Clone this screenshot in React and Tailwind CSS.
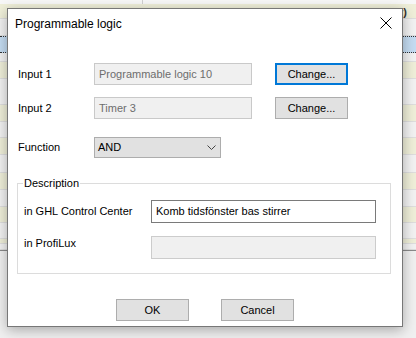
import React from "react";

const bgRows = [
  { h: 15, c: "bg-[#efefd9]", text: true },
  { h: 17, c: "bg-[#f2f2f2]" },
  { h: 17, c: "bg-[#c4dcf2]", sel: true },
  { h: 9, c: "bg-[#f2f2f2]" },
  { h: 17, c: "bg-[#efefd9]" },
  { h: 26, c: "bg-[#f2f2f2]" },
  { h: 17, c: "bg-[#efefd9]" },
  { h: 16, c: "bg-[#f2f2f2]" },
  { h: 17, c: "bg-[#efefd9]" },
  { h: 18, c: "bg-[#f2f2f2]" },
  { h: 17, c: "bg-[#efefd9]" },
  { h: 17, c: "bg-[#f2f2f2]" },
  { h: 16, c: "bg-[#efefd9]" },
  { h: 16, c: "bg-[#f2f2f2]" },
  { h: 5, c: "bg-[#efefd9]" },
  { h: 6, c: "bg-[#f2f2f2]" },
];

function Btn({ children, focused, className = "" }) {
  return (
    <div
      className={
        "w-[73px] h-[22px] flex items-center justify-center bg-[#e1e1e1] text-[11px] text-black " +
        (focused ? "border-2 border-[#0078d7] " : "border border-[#adadad] ") +
        className
      }
    >
      {children}
    </div>
  );
}

export default function App() {
  return (
    <div className="relative w-[416px] h-[338px] overflow-hidden bg-[#f0f0f0] font-['Liberation_Sans',Arial,sans-serif]">
      {/* background window */}
      <div className="flex flex-col w-full">
        <div className="flex h-[4px] bg-[#f7f7f7]">
          <div className="w-[143px] border-r border-[#d0d0d0]"></div>
        </div>
        {bgRows.map((r, i) => (
          <div
            key={i}
            className={
              "w-full border-b border-[#dedede] overflow-hidden " +
              r.c +
              (r.sel ? " border-t border-dotted border-t-[#333] border-b-[#333]" : "")
            }
            style={{ height: r.h }}
          >
            {r.text && (
              <div className="pl-[146px] pt-[2px] text-[11px] font-bold text-[#333] leading-[12px] whitespace-nowrap">
                Redigera Programmable logic (logiska funktioner)
              </div>
            )}
          </div>
        ))}
        <div className="w-full h-[1px] bg-[#8a8a8a]"></div>
      </div>

      {/* dialog */}
      <div className="absolute left-[7px] top-[8px] w-[396px] h-[319px] bg-white border border-[#777777] shadow-[0_3px_12px_rgba(0,0,0,0.3)] flex flex-col">
        <div className="h-[29px] flex items-center justify-between pl-[7px] pr-[10px]">
          <span className="text-[12px] text-black leading-[14px]">Programmable logic</span>
          <svg width="12" height="12" viewBox="0 0 12 12" className="mb-[2px]">
            <path d="M0.5 0.5 L11.5 11.5 M11.5 0.5 L0.5 11.5" stroke="#000" strokeWidth="1" fill="none" />
          </svg>
        </div>

        {/* Input 1 */}
        <div className="mt-[25px] flex items-center h-[22px] pl-[10px] text-[11px] text-black">
          <div className="w-[76px]">Input 1</div>
          <div className="w-[158px] h-[22px] bg-[#f0f0f0] border border-[#c9c9c9] flex items-center pl-[4px] text-[#6d6d6d]">
            Programmable logic 10
          </div>
          <Btn focused className="ml-[23px]">Change...</Btn>
        </div>

        {/* Input 2 */}
        <div className="mt-[12px] flex items-center h-[22px] pl-[10px] text-[11px] text-black">
          <div className="w-[76px]">Input 2</div>
          <div className="w-[158px] h-[22px] bg-[#f0f0f0] border border-[#c9c9c9] flex items-center pl-[4px] text-[#6d6d6d]">
            Timer 3
          </div>
          <Btn className="ml-[23px]">Change...</Btn>
        </div>

        {/* Function */}
        <div className="mt-[18px] flex items-center h-[21px] pl-[10px] text-[11px] text-black">
          <div className="w-[76px]">Function</div>
          <div className="w-[127px] h-[21px] bg-[#e1e1e1] border border-[#adadad] flex items-center justify-between pl-[3px] pr-[4px]">
            <span>AND</span>
            <svg width="9" height="5" viewBox="0 0 9 5">
              <polyline points="0.5,0.5 4.5,4.5 8.5,0.5" stroke="#444" strokeWidth="1" fill="none" />
            </svg>
          </div>
        </div>

        {/* Description group */}
        <fieldset className="mt-[18px] ml-[9px] w-[374px] border border-[#dcdcdc] pl-[5px] pb-[14px] text-[11px] text-black">
          <legend className="px-[1px] leading-[14px]">Description</legend>
          <div className="mt-[10px] flex items-center h-[23px]">
            <div className="w-[128px] pl-[1px]">in GHL Control Center</div>
            <div className="w-[225px] h-[23px] bg-white border border-[#7a7a7a] flex items-center pl-[4px]">
              Komb tidsfönster bas stirrer
            </div>
          </div>
          <div className="mt-[13px] flex items-start h-[23px]">
            <div className="w-[128px] pl-[1px] leading-[14px]">in ProfiLux</div>
            <div className="w-[225px] h-[23px] bg-[#f0f0f0] border border-[#cccccc]"></div>
          </div>
        </fieldset>

        {/* Buttons */}
        <div className="mt-[25px] flex ml-[108px] gap-[32px]">
          <Btn>OK</Btn>
          <Btn>Cancel</Btn>
        </div>
      </div>
    </div>
  );
}
